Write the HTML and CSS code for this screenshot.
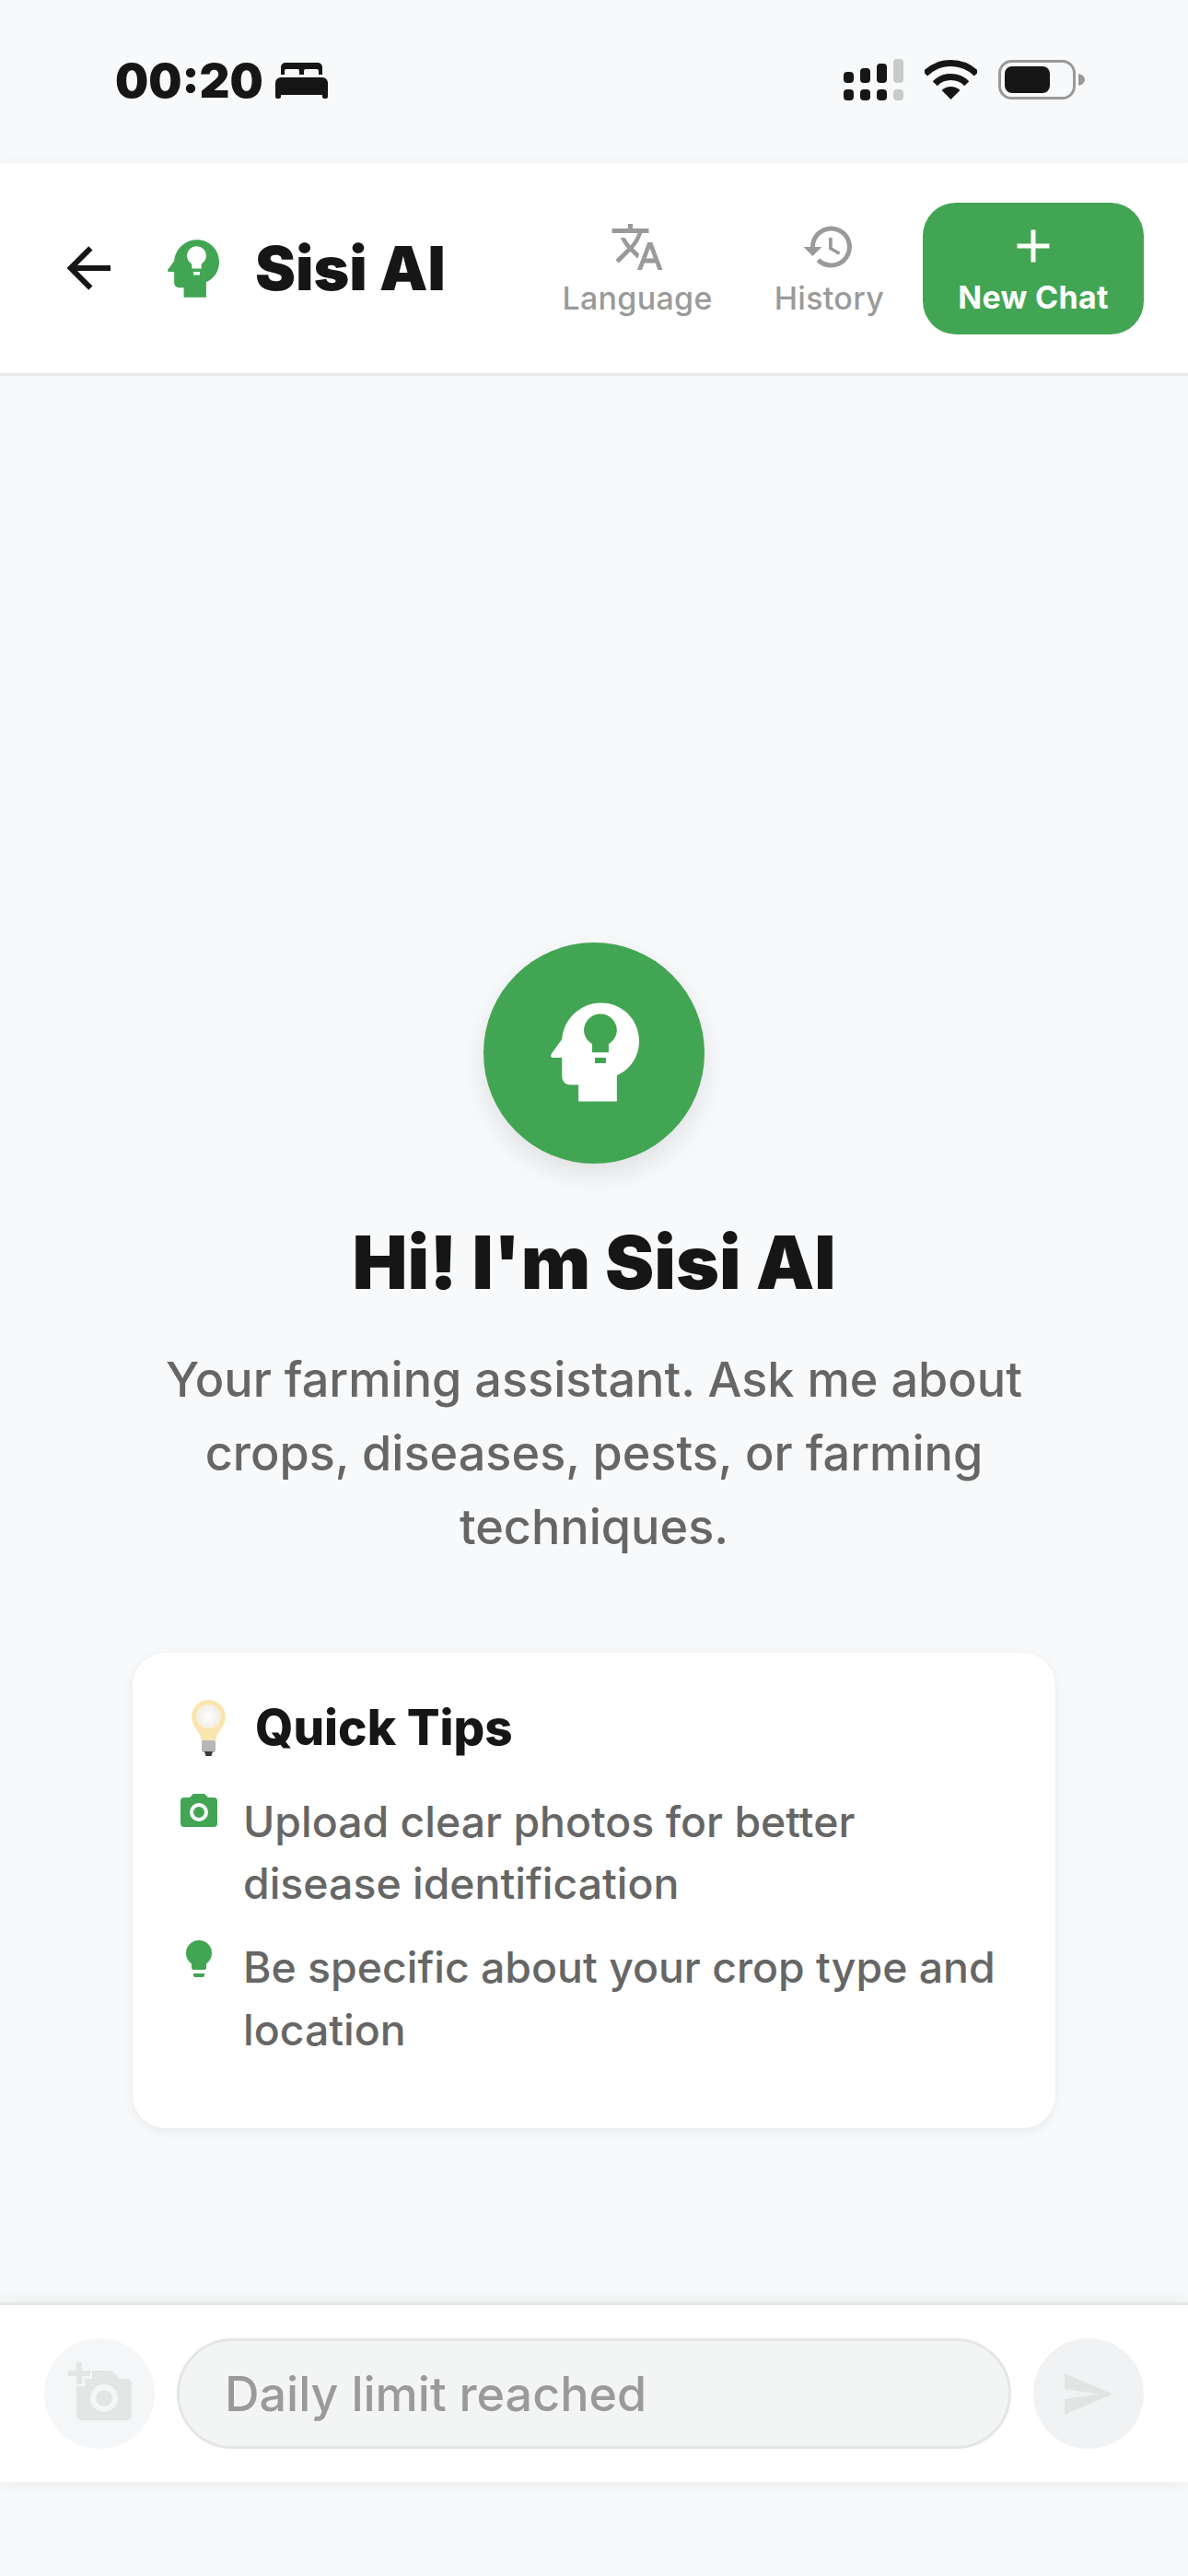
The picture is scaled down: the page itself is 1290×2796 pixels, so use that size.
FILE: index.html
```html
<!DOCTYPE html>
<html lang="en">
<head>
<meta charset="utf-8">
<title>Sisi AI</title>
<link rel="stylesheet" href="styles.css">
</head>
<body>
<div class="status">
  <div class="status-left">
    <span class="time">00:20</span>
    <svg class="bed" viewBox="0 0 57 39"><path fill="#161616" d="M6 13V5a5 5 0 0 1 5-5h35a5 5 0 0 1 5 5v8h-4V9a2 2 0 0 0-2-2H33a2 2 0 0 0-2 2v4h-5V9a2 2 0 0 0-2-2H12a2 2 0 0 0-2 2v4zM0 22a6 6 0 0 1 6-6h45a6 6 0 0 1 6 6v15a2 2 0 0 1-2 2h-2a2 2 0 0 1-2-2v-2H6v2a2 2 0 0 1-2 2H2a2 2 0 0 1-2-2z"/></svg>
  </div>
  <div class="status-right">
    <svg class="signal" viewBox="0 0 65 45">
      <rect x="0" y="14" width="11" height="12" rx="4" fill="#161616"/><rect x="18" y="10" width="11" height="16" rx="4" fill="#161616"/><rect x="36" y="5" width="11" height="21" rx="4" fill="#161616"/><rect x="54" y="0" width="11" height="26" rx="4" fill="#c9cbca"/>
      <rect x="0" y="33" width="11" height="12" rx="4" fill="#161616"/><rect x="18" y="33" width="11" height="12" rx="4" fill="#161616"/><rect x="36" y="33" width="11" height="12" rx="4" fill="#161616"/><rect x="54" y="33" width="11" height="12" rx="4" fill="#c9cbca"/>
    </svg>
    <svg class="wifi" viewBox="0 0 57 43"><path fill="none" stroke="#161616" stroke-width="7" d="M.6 15.1A39.5 39.5 0 0 1 56.4 15.1M11.2 25.7A24.5 24.5 0 0 1 45.8 25.7"/><path fill="#161616" d="M28.5 43 18.6 33.1A14 14 0 0 1 38.4 33.1Z"/></svg>
    <svg class="battery" viewBox="0 0 94 43"><rect x="1.5" y="1.5" width="81" height="40" rx="13" fill="none" stroke="#999" stroke-width="3"/><rect x="7" y="7" width="49" height="29" rx="8" fill="#161616"/><path fill="#999" d="M87 15c4 1 7 3 7 6.500s-3 5.500-7 6.500z"/></svg>
  </div>
</div>

<header class="header">
  <svg class="icon-back" viewBox="0 0 24 24"><path fill="#161616" d="M20,11V13H8L13.5,18.5L12.08,19.92L4.16,12L12.08,4.08L13.5,5.5L8,11H20Z"/></svg>
  <svg class="head head-small" viewBox="350 297 290 323"><use href="#head-shape" fill="#42a553"/></svg>
  <h1 class="title">Sisi AI</h1>
  <nav class="actions">
    <div class="action action-lang">
      <svg class="icon-60" viewBox="0 0 24 24"><path fill="#9a9a9a" d="M12.87,15.07L10.33,12.56L10.36,12.53C12.1,10.59 13.34,8.36 14.07,6H17V4H10V2H8V4H1V6H12.17C11.5,7.92 10.44,9.75 9,11.35C8.07,10.32 7.3,9.19 6.69,8H4.69C5.42,9.63 6.42,11.17 7.67,12.56L2.58,17.58L4,19L9,14L12.11,17.11L12.87,15.07M18.5,10H16.5L12,22H14L15.12,19H19.87L21,22H23L18.5,10M15.88,17L17.5,12.67L19.12,17H15.88Z"/></svg>
      <span>Language</span>
    </div>
    <div class="action action-hist">
      <svg class="icon-60" viewBox="0 0 24 24"><path fill="#9a9a9a" d="M13 3a9 9 0 0 0-9 9H1l3.89 3.89.07.14L9 12H6c0-3.87 3.13-7 7-7s7 3.13 7 7-3.13 7-7 7c-1.93 0-3.68-.79-4.94-2.06l-1.42 1.42A8.954 8.954 0 0 0 13 21a9 9 0 0 0 0-18zm-1 5v5l4.28 2.54.72-1.21-3.5-2.080V8H12z"/></svg>
      <span>History</span>
    </div>
    <button class="new-chat">
      <svg class="icon-60" viewBox="0 0 24 24"><path fill="#fff" d="M19,13H13V19H11V13H5V11H11V5H13V11H19V13Z"/></svg>
      <span>New Chat</span>
    </button>
  </nav>
</header>

<svg class="defs" width="0" height="0">
  <defs>
    <path id="head-shape" fill-rule="evenodd" d="M515 297C585 297 640 352 640 422C640 475 610 515 567 535L567 620L441 620L441 566L414 566C398 566 387 553 387 538L387 477L358 477C350 477 349 468 353 463L387 416C392 350 448 297 515 297ZM486 432C470 422 459 406 459 387A54 54 0 0 1 567 387C567 406 556 422 540 432L540 459L486 459ZM495 477H531V495H495Z"/>
  </defs>
</svg>

<main class="main">
  <div class="avatar">
    <svg class="head head-big" viewBox="350 297 290 323"><use href="#head-shape" fill="#fff"/></svg>
  </div>
  <h2 class="hello">Hi! I'm Sisi AI</h2>
  <p class="lead">Your farming assistant. Ask me about crops, diseases, pests, or farming techniques.</p>
  <section class="card">
    <div class="card-title">
      <svg class="emoji-bulb" viewBox="0 0 37 61">
        <defs><radialGradient id="glass"><stop offset="0" stop-color="#fff"/><stop offset=".7" stop-color="#f2f2f2"/><stop offset="1" stop-color="#fbeecb"/></radialGradient></defs>
        <path fill="#f9e6ae" d="M18.500 0A18.500 18.500 0 0 1 37 18.500C37 27 31 32 28 38L26 45H11L9 38C6 32 0 27 0 18.500A18.500 18.500 0 0 1 18.500 0Z"/>
        <circle cx="18.500" cy="18" r="13.500" fill="url(#glass)"/>
        <rect x="11" y="44" width="15" height="13" rx="2" fill="#b5b7b6"/>
        <path fill="#3a3a3a" d="M14 56h9l-1.500 5h-6z"/>
      </svg>
      <h3>Quick Tips</h3>
    </div>
    <ul class="tips">
      <li class="tip">
        <svg class="icon-48" viewBox="0 0 24 24"><path fill="#42a553" fill-rule="evenodd" d="M4,4H7L9,2H15L17,4H20A2,2 0 0,1 22,6V18A2,2 0 0,1 20,20H4A2,2 0 0,1 2,18V6A2,2 0 0,1 4,4M12,7A5,5 0 0,0 7,12A5,5 0 0,0 12,17A5,5 0 0,0 17,12A5,5 0 0,0 12,7M12,9A3,3 0 0,1 15,12A3,3 0 0,1 12,15A3,3 0 0,1 9,12A3,3 0 0,1 12,9Z"/></svg>
        <span>Upload clear photos for better disease identification</span>
      </li>
      <li class="tip">
        <svg class="icon-48" viewBox="0 0 24 24"><path fill="#42a553" d="M12,2A7,7 0 0,0 5,9C5,11.38 6.19,13.47 8,14.74V17A1,1 0 0,0 9,18H15A1,1 0 0,0 16,17V14.74C17.81,13.47 19,11.38 19,9A7,7 0 0,0 12,2M9,21A1,1 0 0,0 10,22H14A1,1 0 0,0 15,21V20H9V21Z"/></svg>
        <span>Be specific about your crop type and location</span>
      </li>
    </ul>
  </section>
</main>

<footer class="composer">
  <div class="round round-cam">
    <svg class="cam-plus" viewBox="0 0 69 63"><path fill="#e4e6e6" fill-rule="evenodd" d="M9 14A4 4 0 0 1 13 9H47L56 18H64A5 5 0 0 1 69 23V58A5 5 0 0 1 64 63H14A5 5 0 0 1 9 58ZM39 24A15 15 0 1 0 39 54A15 15 0 1 0 39 24ZM39 30A9 9 0 1 1 39 48A9 9 0 1 1 39 30Z"/><path fill="#f5f6f7" d="M6 -1H18V6H26V18H18V26H6Z"/><path fill="#e4e6e6" d="M9 0H15V9H24V15H15V24H9V15H0V9H9Z"/></svg>
  </div>
  <div class="input">Daily limit reached</div>
  <div class="round round-send">
    <svg class="send" viewBox="0 0 52 45"><path fill="#e2e4e3" d="M0 0 52 22.500 0 45V28L38 22.500 0 17Z"/></svg>
  </div>
</footer>
</body>
</html>
```
FILE: styles.css
```css
* { box-sizing: border-box; }
html, body { margin: 0; padding: 0; }
body {
  width: 1290px;
  height: 2796px;
  background: #f8f9fa;
  font-family: Inter, "Liberation Sans", sans-serif;
  display: flex;
  flex-direction: column;
  color: #161616;
  overflow: hidden;
}
.defs { position: absolute; }

.status {
  height: 177px;
  flex: none;
  position: relative;
  display: flex;
  justify-content: space-between;
  padding: 64px 112px 0 125px;
}
.status-left { display: flex; align-items: flex-start; }
.time { font-size: 51px; font-weight: 900; line-height: 48px; height: 48px; }
.bed { width: 57px; height: 39px; margin: 4px 0 0 13px; }
.status-right { display: flex; align-items: flex-start; }
.signal { width: 65px; height: 45px; }
.wifi { width: 57px; height: 43px; margin: 1px 0 0 23px; }
.battery { width: 94px; height: 43px; margin: 1px 0 0 23px; }

.header {
  height: 231px;
  flex: none;
  background: #fff;
  border-bottom: 3px solid #e8eaed;
  display: flex;
  align-items: center;
  padding: 0 48px 0 60px;
  box-shadow: 0 -2px 8px rgba(0, 0, 0, .03);
  position: relative;
}
.icon-back { width: 72px; height: 72px; flex: none; }
.head { display: block; flex: none; }
.head-small { width: 56px; height: 63px; margin: 0 39px 0 50px; }
.title { margin: 0; font-size: 66px; font-weight: 900; line-height: 80px; white-space: nowrap; }
.actions { margin-left: auto; display: flex; align-items: center; }
.action { display: flex; flex-direction: column; align-items: center; gap: 4px; color: #9a9a9a; font-size: 34px; font-weight: 500; line-height: 44px; letter-spacing: .3px; padding-top: 1px; }
.action span { display: block; }
.action-hist { margin: 0 42px 0 67px; }
.icon-60 { width: 60px; height: 60px; display: block; }
.new-chat {
  width: 240px;
  height: 143px;
  border: 0;
  border-radius: 36px;
  background: #42a553;
  color: #fff;
  font: 700 34px/44px Inter, "Liberation Sans", sans-serif;
  letter-spacing: .3px;
  padding: 0;
  display: flex;
  flex-direction: column;
  align-items: center;
  justify-content: center;
  gap: 4px;
}

.main {
  flex: 1;
  display: flex;
  flex-direction: column;
  align-items: center;
  padding-top: 615px;
}
.avatar {
  width: 240px;
  height: 240px;
  border-radius: 50%;
  background: #42a553;
  display: flex;
  align-items: center;
  justify-content: center;
  box-shadow: 0 12px 30px rgba(0, 0, 0, .1);
}
.head-big { width: 96px; height: 108px; transform: translate(1px, -1px); }
.hello { margin: 57px 0 0; font-size: 80px; font-weight: 900; line-height: 100px; text-align: center; white-space: nowrap; }
.lead { margin: 37px 0 0; width: 1000px; font-size: 52.2px; font-weight: 500; line-height: 80px; color: #666; text-align: center; }
.card {
  width: 1002px;
  height: 516px;
  margin-top: 97px;
  padding: 48px;
  background: #fff;
  border-radius: 36px;
  box-shadow: 0 3px 12px rgba(0, 0, 0, .07);
}
.card-title { display: flex; align-items: center; height: 66px; padding-left: 16px; }
.emoji-bulb { width: 37px; height: 61px; flex: none; }
.card-title h3 { margin: 0 0 0 32px; font-size: 53px; font-weight: 800; line-height: 66px; }
.tips { list-style: none; margin: 36px 0 0; padding: 0; }
.tip { display: flex; gap: 24px; font-size: 46.4px; font-weight: 500; line-height: 67.2px; color: #666; margin-bottom: 24px; }
.icon-48 { width: 48px; height: 48px; flex: none; }
.tip:first-child .icon-48 { margin-top: -1px; }

.composer {
  height: 195px;
  flex: none;
  margin-bottom: 102px;
  background: #fff;
  border-top: 3px solid #e6e8e8;
  box-shadow: 0 0 20px rgba(0, 0, 0, .07);
  display: flex;
  align-items: center;
  padding: 0 48px;
  gap: 24px;
}
.round { width: 120px; height: 120px; border-radius: 50%; flex: none; display: flex; align-items: center; justify-content: center; }
.round-cam { background: #f5f6f7; }
.round-send { background: #f1f2f3; }
.cam-plus { width: 69px; height: 63px; transform: translateY(-3px); }
.send { width: 52px; height: 45px; }
.input {
  flex: 1;
  height: 120px;
  border: 3px solid #e5e7e7;
  border-radius: 60px;
  background: #f3f4f4;
  color: #9a9a9a;
  font-size: 52px;
  font-weight: 500;
  display: flex;
  align-items: center;
  padding-left: 49px;
}
```
